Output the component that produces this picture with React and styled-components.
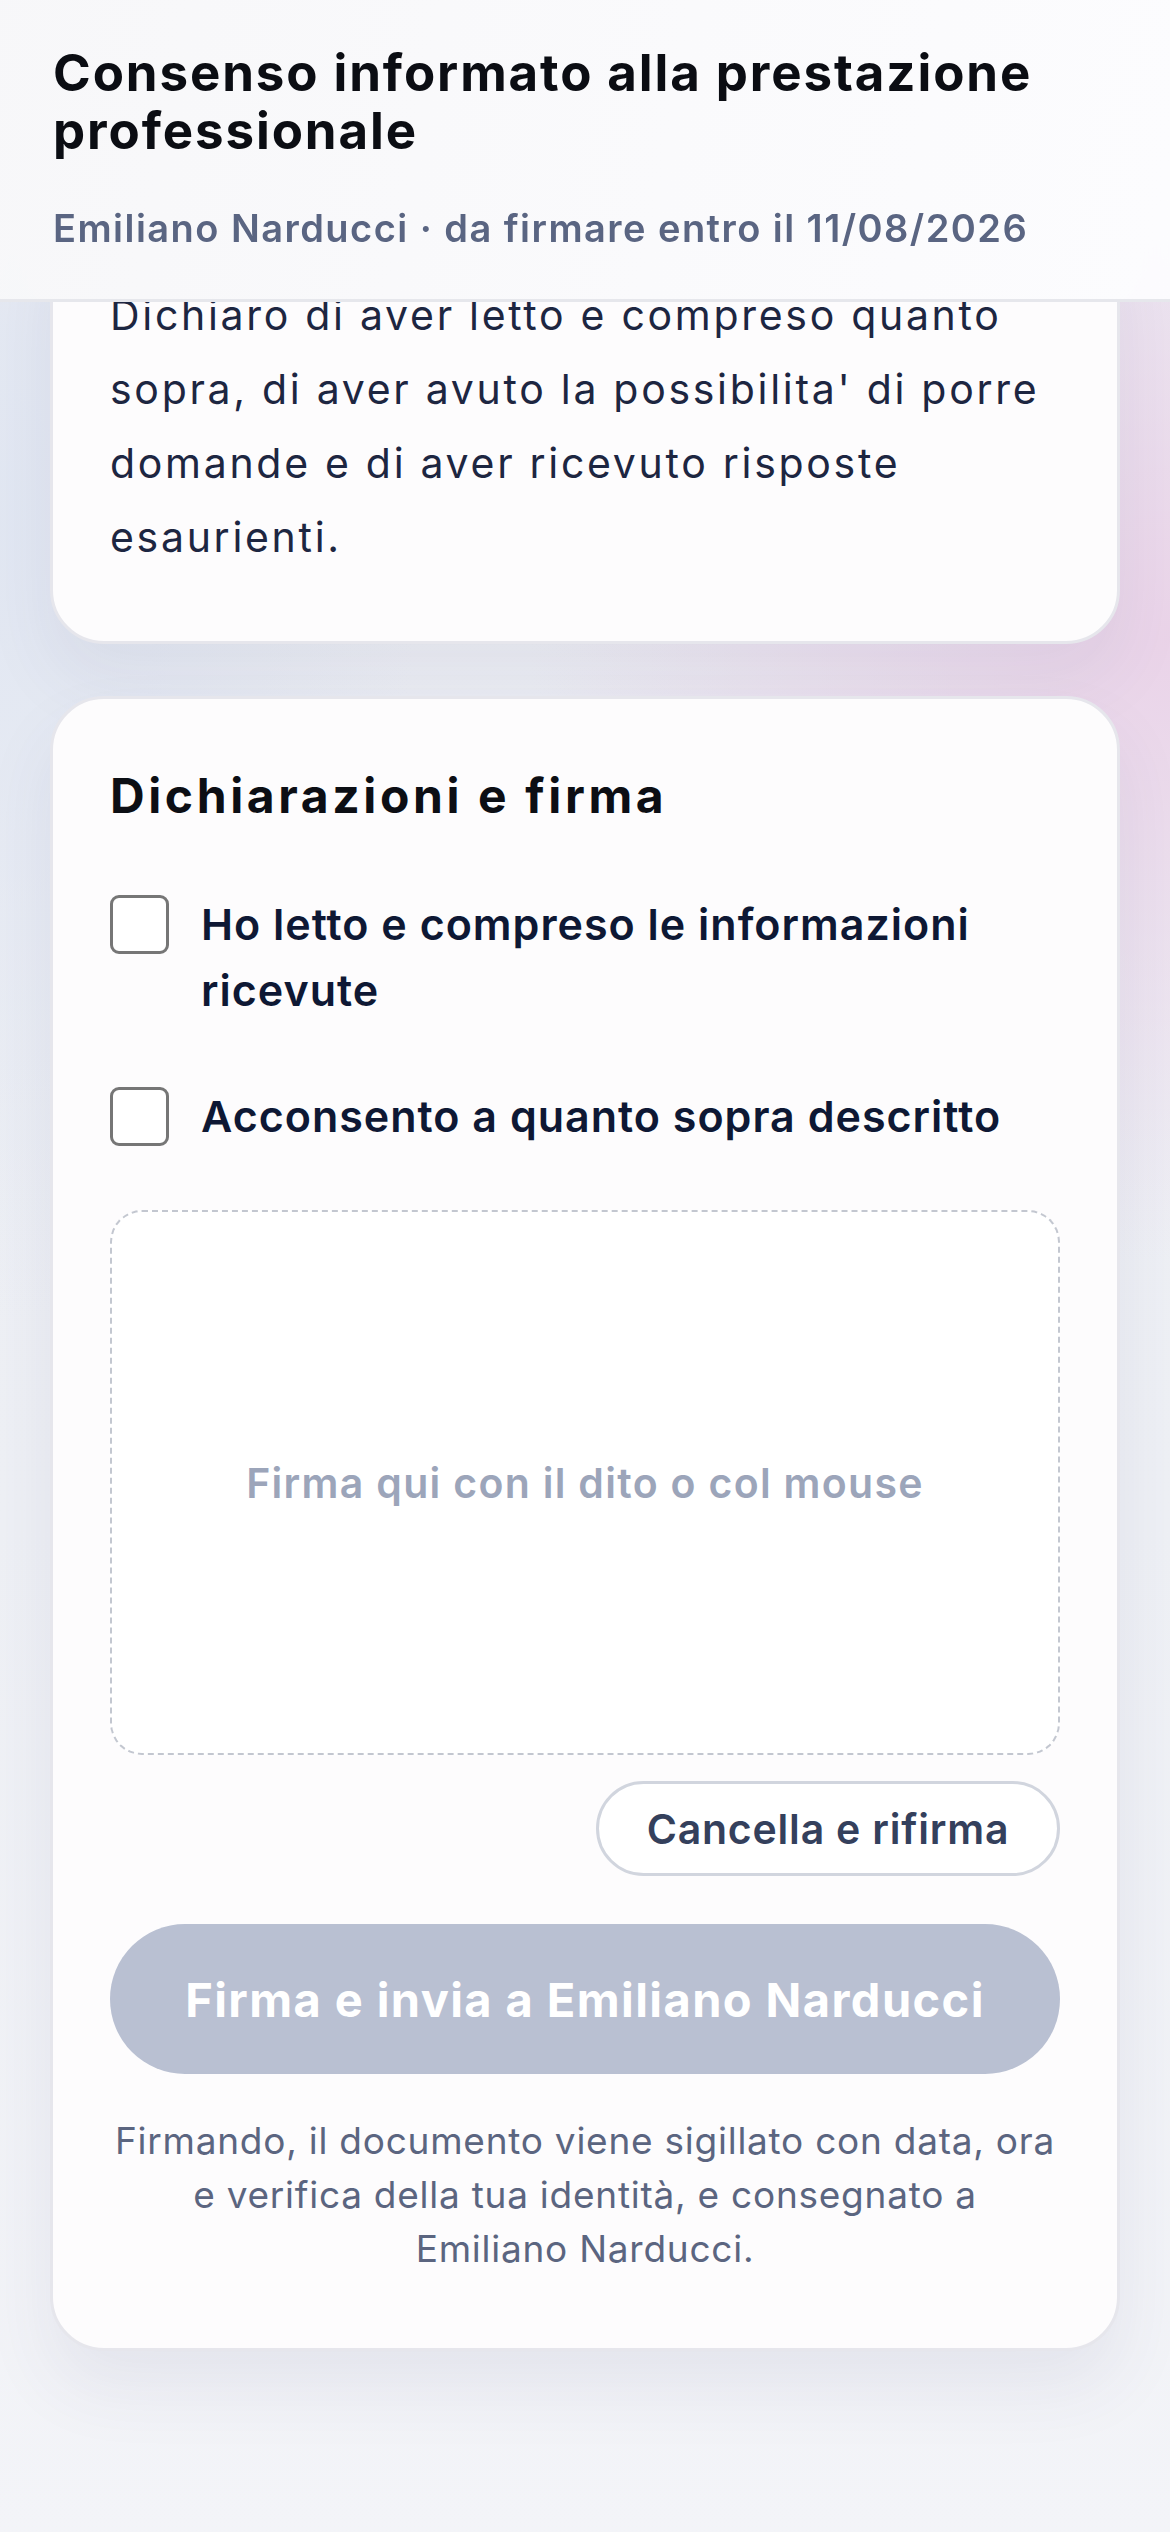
import React from 'react';
import styled, { createGlobalStyle } from 'styled-components';

const GlobalStyle = createGlobalStyle`
  html, body {
    margin: 0;
    padding: 0;
  }
  body {
    font-family: Inter, "Noto Sans", "Liberation Sans", sans-serif;
    background: #eff1f6;
    -webkit-font-smoothing: antialiased;
  }
  * {
    box-sizing: border-box;
  }
`;

const Page = styled.div`
  min-height: 2532px;
  background:
    radial-gradient(ellipse 640px 620px at 100% 640px, rgba(234, 210, 232, 0.95), rgba(234, 210, 232, 0) 100%),
    radial-gradient(ellipse 420px 800px at 0% 520px, rgba(224, 230, 242, 0.9), rgba(224, 230, 242, 0) 100%),
    linear-gradient(180deg, #eceef4 0%, #eef0f5 60%, #f3f4f8 100%);
`;

const Header = styled.header`
  position: fixed;
  top: 0;
  left: 0;
  right: 0;
  z-index: 10;
  height: 302px;
  padding: 44px 53px 0;
  background: linear-gradient(100deg, rgba(247, 247, 249, 0.97), rgba(252, 252, 254, 0.97));
  backdrop-filter: blur(18px);
  border-bottom: 3px solid #e6e7ec;
`;

const Title = styled.h1`
  margin: 0;
  font-size: 51px;
  line-height: 58px;
  font-weight: 700;
  letter-spacing: 1.9px;
  color: #0b0d13;
`;

const Meta = styled.p`
  margin: 44px 0 0;
  font-size: 38px;
  line-height: 48px;
  font-weight: 600;
  letter-spacing: 1.45px;
  color: #5a6582;
`;

const Main = styled.main`
  display: flex;
  flex-direction: column;
  gap: 52px;
  padding: 209px 50px 190px;
`;

const Card = styled.section`
  background: #fdfcfd;
  border: 3px solid #e6e6ec;
  border-radius: 54px;
  padding: 66px 57px ${p => p.$bottom || 68}px;
  box-shadow: 0 36px 70px rgba(60, 70, 110, 0.08);
`;

const Body = styled.p`
  margin: 0;
  font-size: 41px;
  line-height: 74px;
  font-weight: 400;
  letter-spacing: 2.7px;
  color: #1d2641;
`;

const SectionTitle = styled.h2`
  margin: 0;
  font-size: 48px;
  line-height: 62px;
  font-weight: 700;
  letter-spacing: 3.6px;
  color: #0c0e14;
`;

const Checks = styled.div`
  display: flex;
  flex-direction: column;
  gap: 60px;
  margin-top: 64px;
`;

const CheckRow = styled.label`
  display: flex;
  align-items: flex-start;
  gap: 32px;
`;

const Box = styled.span`
  flex: none;
  width: 59px;
  height: 59px;
  margin-top: 4px;
  border: 3px solid #767676;
  border-radius: 9px;
  background: #ffffff;
`;

const CheckText = styled.span`
  font-size: 43px;
  line-height: 66px;
  font-weight: 600;
  letter-spacing: 1px;
  color: #0e1834;
`;

const Pad = styled.div`
  display: flex;
  align-items: center;
  justify-content: center;
  height: 545px;
  margin-top: 61px;
  background: #ffffff;
  border: 2px dashed #c3c7d0;
  border-radius: 32px;
  font-size: 41px;
  font-weight: 600;
  letter-spacing: 1.3px;
  color: #9ca5ba;
`;

const Actions = styled.div`
  display: flex;
  justify-content: flex-end;
  margin-top: 26px;
`;

const GhostButton = styled.button`
  height: 95px;
  width: 464px;
  border: 3px solid #d1d5de;
  border-radius: 48px;
  background: #ffffff;
  font-family: inherit;
  font-size: 41px;
  font-weight: 600;
  letter-spacing: 0.8px;
  color: #34405c;
`;

const SubmitButton = styled.button`
  display: block;
  width: 100%;
  height: 150px;
  margin-top: 48px;
  border: none;
  border-radius: 75px;
  background: #b9c0d2;
  font-family: inherit;
  font-size: 47px;
  font-weight: 700;
  letter-spacing: 1.4px;
  color: #ffffff;
`;

const Note = styled.p`
  margin: 40px 0 0;
  text-align: center;
  font-size: 37px;
  line-height: 54px;
  font-weight: 400;
  letter-spacing: 0.75px;
  color: #5b6580;
`;

const checks = [
  'Ho letto e compreso le informazioni ricevute',
  'Acconsento a quanto sopra descritto',
];

// keep the recipient's name on one line
const sealNote =
  'Firmando, il documento viene sigillato con data, ora e verifica della tua identità, e consegnato a Emiliano\u00a0Narducci.';

export default function App() {
  return (
    <Page>
      <GlobalStyle />
      <Header>
        <Title>Consenso informato alla prestazione professionale</Title>
        <Meta>Emiliano Narducci · da firmare entro il 11/08/2026</Meta>
      </Header>
      <Main>
        <Card $bottom={67}>
          <Body>
            Dichiaro di aver letto e compreso quanto sopra, di aver avuto la
            possibilita' di porre domande e di aver ricevuto risposte esaurienti.
          </Body>
        </Card>
        <Card $bottom={72}>
          <SectionTitle>Dichiarazioni e firma</SectionTitle>
          <Checks>
            {checks.map(text => (
              <CheckRow key={text}>
                <Box />
                <CheckText>{text}</CheckText>
              </CheckRow>
            ))}
          </Checks>
          <Pad>Firma qui con il dito o col mouse</Pad>
          <Actions>
            <GhostButton>Cancella e rifirma</GhostButton>
          </Actions>
          <SubmitButton>Firma e invia a Emiliano Narducci</SubmitButton>
          <Note>{sealNote}</Note>
        </Card>
      </Main>
    </Page>
  );
}
